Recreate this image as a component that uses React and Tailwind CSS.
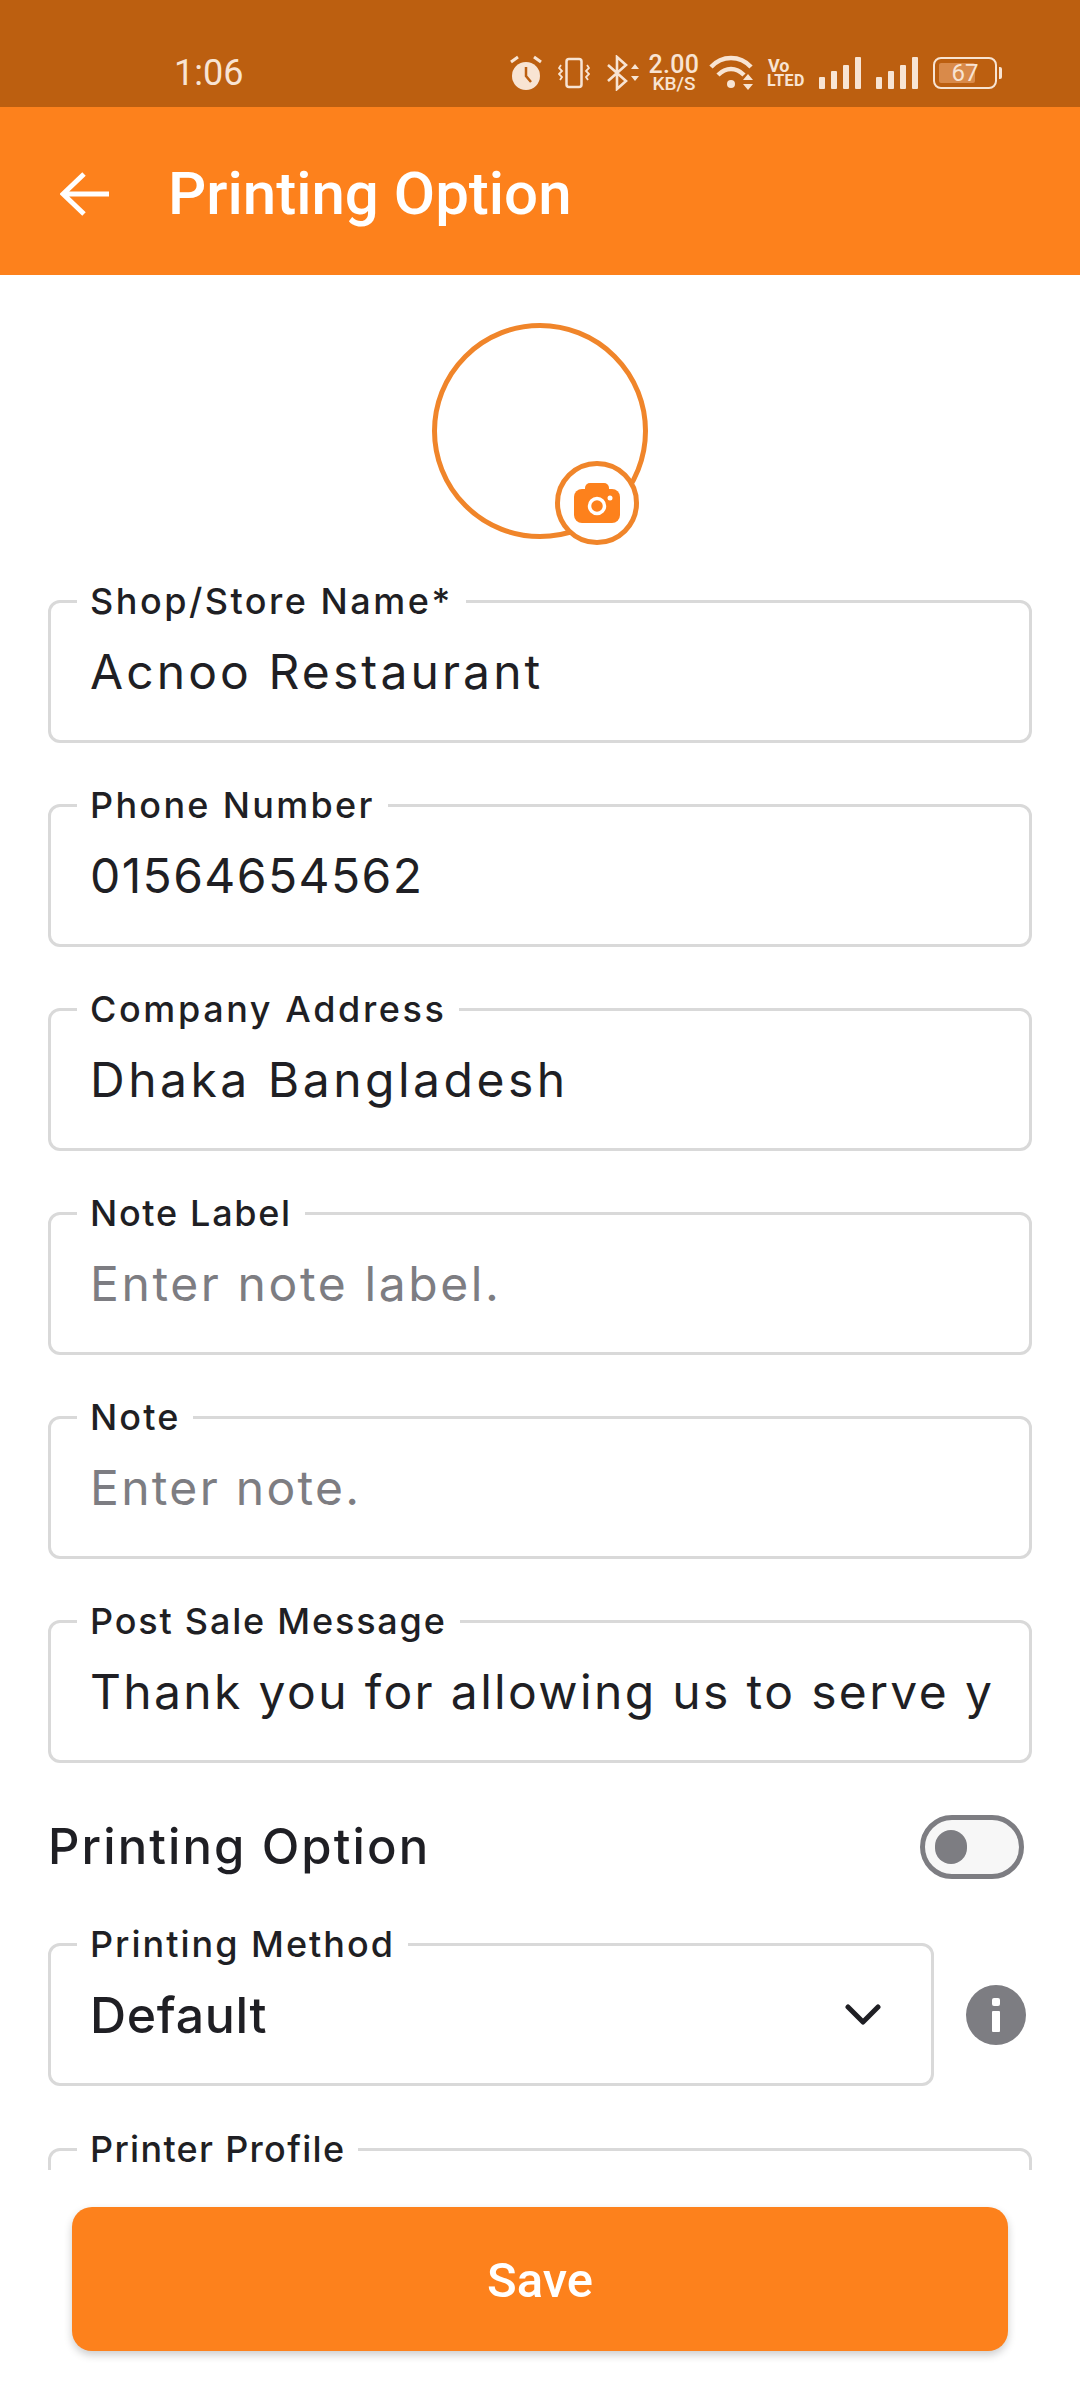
import React from "react";

const fields = [
  { label: "Shop/Store Name*", labelTrack: "tracking-[2.5px]", value: "Acnoo Restaurant", track: "tracking-[3.1px]" },
  { label: "Phone Number", labelTrack: "tracking-[2.3px]", value: "01564654562", track: "tracking-[1.4px]" },
  { label: "Company Address", labelTrack: "tracking-[2.6px]", value: "Dhaka Bangladesh", track: "tracking-[3.5px]" },
  { label: "Note Label", labelTrack: "tracking-[1.7px]", placeholder: "Enter note label.", track: "tracking-[2.6px]" },
  { label: "Note", labelTrack: "tracking-[2.1px]", placeholder: "Enter note.", track: "tracking-[2.3px]" },
  { label: "Post Sale Message", labelTrack: "tracking-[1.8px]", value: "Thank you for allowing us to serve y", track: "tracking-[2.35px]" },
];

function FieldLabel({ children, track }) {
  return (
    <span className={`absolute left-[26px] top-[-22px] bg-white px-[13px] text-[36px] leading-[40px] font-medium text-[#1f1f24] whitespace-nowrap ${track}`}>
      {children}
    </span>
  );
}

function Field({ label, labelTrack, value, placeholder, track }) {
  return (
    <div className="relative h-[143px] rounded-[12px] border-[3px] border-[#d9d9d9] bg-white">
      <FieldLabel track={labelTrack}>{label}</FieldLabel>
      <div className={`ml-[39px] mt-[41px] whitespace-nowrap text-[48px] leading-[56px] ${track}`}>
        {value ? <span className="text-[#1f1f24]">{value}</span> : <span className="text-[#7d7d82]">{placeholder}</span>}
      </div>
    </div>
  );
}

function StatusIcons() {
  const c = "#f8e4d3";
  return (
    <div className="flex items-center h-[36px] ml-auto mr-[83px]">
      <svg width="32" height="36" viewBox="0 0 32 36" className="mr-[16px]">
        <circle cx="16" cy="21" r="14" fill={c} />
        <path d="M16 12v9l5 6" stroke="#bc5f10" strokeWidth="2.5" fill="none" />
        <path d="M1 7l7-5M31 7l-7-5" stroke={c} strokeWidth="3" />
      </svg>
      <svg width="32" height="32" viewBox="0 0 32 32" className="mr-[16px]">
        <rect x="8.5" y="2" width="15" height="28" rx="2.5" stroke={c} strokeWidth="2.5" fill="none" />
        <path d="M3 8l-2 3 3 3-3 3 3 3-2 3M29 8l2 3-3 3 3 3-3 3 2 3" stroke={c} strokeWidth="1.8" fill="none" />
      </svg>
      <svg width="34" height="36" viewBox="0 0 34 36" className="mr-[9px]">
        <path d="M2 10l18 16-9 8V2l9 8L2 26" stroke={c} strokeWidth="2.6" fill="none" />
        <path d="M25 14l4-5 4 5zM25 21l4 5 4-5z" fill={c} />
      </svg>
      <div className="w-[50px] mr-[10px] flex flex-col items-center font-['Roboto',sans-serif] font-medium text-[#f8e4d3]">
        <span className="text-[25px] leading-[21px] tracking-[0.3px]">2.00</span>
        <span className="text-[19px] leading-[17px]">KB/S</span>
      </div>
      <svg width="46" height="36" viewBox="0 0 46 36" className="mr-[12px]">
        <path d="M2 12C13 0 31 0 42 12" stroke={c} strokeWidth="4.5" fill="none" />
        <path d="M9 20c8-8 18-8 26 0" stroke={c} strokeWidth="4.5" fill="none" />
        <circle cx="22" cy="29" r="4" fill={c} />
        <path d="M34 25l5-6 5 6zM34 29l5 6 5-6z" fill={c} />
      </svg>
      <div className="w-[38px] mr-[14px] flex flex-col font-['Roboto',sans-serif] font-bold text-[#f8e4d3] items-start">
        <span className="text-[18px] leading-[15px] ml-[1px]">Vo</span>
        <span className="text-[16px] leading-[15px] tracking-[0.4px]">LTED</span>
      </div>
      {[0, 1].map((k) => (
        <svg key={k} width="42" height="32" viewBox="0 0 42 32" className="mr-[15px]">
          <rect x="0" y="20" width="6" height="12" rx="1" fill={c} />
          <rect x="12" y="14" width="6" height="18" rx="1" fill={c} />
          <rect x="24" y="8" width="6" height="24" rx="1" fill={c} />
          <rect x="36" y="0" width="6" height="32" rx="1" fill={c} />
        </svg>
      ))}
      <div className="relative w-[64px] h-[32px] rounded-[8px] border-[2px] border-[#f8e4d3]">
        <div className="absolute left-[4px] top-[4px] bottom-[4px] w-[36px] bg-[#d98a4a] rounded-[2px]" />
        <span className="absolute inset-0 flex items-center justify-center font-['Roboto',sans-serif] text-[24px] leading-none text-[#f8e4d3]">67</span>
        <div className="absolute right-[-7px] top-[8px] h-[12px] w-[3px] bg-[#f8e4d3] rounded-r-[2px]" />
      </div>
    </div>
  );
}

export default function App() {
  return (
    <div className="flex h-[2400px] w-[1080px] flex-col overflow-hidden bg-white font-['Inter',sans-serif]">
      <div className="flex h-[107px] items-center bg-[#bc5f10] pt-[39px] pl-[174px] font-['Roboto',sans-serif]">
        <span className="text-[36px] leading-[40px] text-[#f8e4d3]">1:06</span>
        <StatusIcons />
      </div>
      <header className="flex h-[168px] items-center bg-[#fd811c] pl-[60px] pt-[5px] font-['Roboto',sans-serif]">
        <svg width="50" height="44" viewBox="0 0 50 44" fill="none" stroke="white" strokeWidth="5" className="mr-[58px]">
          <path d="M49 22H4M24 2L3 22l21 20" />
        </svg>
        <h1 className="text-[60px] leading-[66px] font-medium text-white">Printing Option</h1>
      </header>

      <main className="h-[1895px] overflow-hidden bg-white px-[48px]">
        <div className="flex justify-center pt-[48px]">
          <div className="relative h-[216px] w-[216px] rounded-full border-[5px] border-[#f0852a]">
            <div className="absolute left-[118px] top-[133px] flex h-[84px] w-[84px] items-center justify-center rounded-full border-[5px] border-[#f0852a] bg-white">
              <svg width="46" height="40" viewBox="0 0 46 40">
                <rect x="11" y="0" width="24" height="14" rx="5" fill="#fd811c" />
                <rect x="0" y="6" width="46" height="34" rx="8" fill="#fd811c" />
                <circle cx="23" cy="23" r="7.5" fill="#fd811c" stroke="#fff" strokeWidth="3.5" />
                <circle cx="36" cy="15" r="2.5" fill="#fff" />
              </svg>
            </div>
          </div>
        </div>

        <div className="mt-[61px] flex flex-col gap-[61px]">
          {fields.map((f) => (
            <Field key={f.label} {...f} />
          ))}
        </div>

        <div className="mt-[52px] flex h-[64px] items-center justify-between pr-[8px]">
          <h2 className="text-[49px] leading-[60px] font-medium tracking-[2.1px] text-[#1f1f24]">Printing Option</h2>
          <div className="flex h-[64px] w-[104px] items-center rounded-full border-[5px] border-[#7d7d82] bg-[#f7f7f7] pl-[10px]">
            <div className="h-[34px] w-[32px] rounded-full bg-[#7d7d82]" />
          </div>
        </div>

        <div className="mt-[64px] flex items-center gap-[32px] pr-[6px]">
          <div className="relative h-[143px] flex-1 rounded-[12px] border-[3px] border-[#d9d9d9] bg-white">
            <FieldLabel track="tracking-[2px]">Printing Method</FieldLabel>
            <div className="flex items-center justify-between pl-[39px] pr-[50px] pt-[41px]">
              <span className="text-[50px] leading-[56px] font-medium tracking-[0.7px] text-[#1f1f24]">Default</span>
              <svg width="36" height="24" viewBox="0 0 36 24" fill="none" stroke="#1f1f24" strokeWidth="5" strokeLinecap="round" strokeLinejoin="round">
                <path d="M3 4l15 15L33 4" />
              </svg>
            </div>
          </div>
          <div className="relative flex h-[60px] w-[60px] shrink-0 items-center justify-center rounded-full bg-[#7d7d82]">
            <svg width="10" height="34" viewBox="0 0 10 34" fill="white">
              <rect x="1" y="0" width="8" height="8" rx="2" />
              <rect x="1" y="13" width="8" height="21" rx="1" />
            </svg>
          </div>
        </div>

        <div className="relative mt-[62px] h-[143px] rounded-[12px] border-[3px] border-[#d9d9d9] bg-white">
          <FieldLabel track="tracking-[1.3px]">Printer Profile</FieldLabel>
        </div>
      </main>

      <div className="px-[72px] pt-[37px]">
        <button className="flex h-[144px] w-full items-center justify-center rounded-[20px] bg-[#fd811c] pt-[3px] font-['Roboto',sans-serif] text-[49px] font-medium text-white shadow-[0_4px_8px_rgba(0,0,0,0.2)]">
          Save
        </button>
      </div>
    </div>
  );
}
